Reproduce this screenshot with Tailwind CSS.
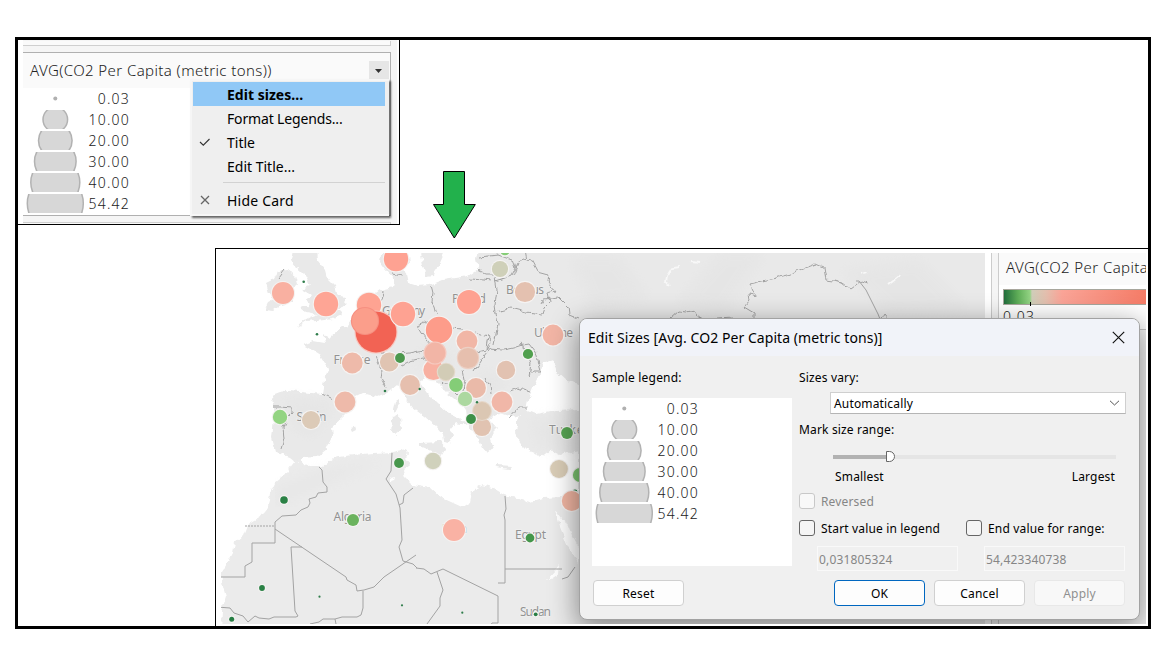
<!DOCTYPE html>
<html lang="en">
<head>
<meta charset="utf-8">
<title>Edit Sizes</title>
<script src="https://cdn.jsdelivr.net/npm/@tailwindcss/browser@4"></script>
</head>
<body class="h-[648px] w-[1152px] overflow-hidden bg-white font-['Noto_Sans',sans-serif] text-black">
<main class="mt-[37px] ml-[15px] flex h-[592px] w-[1136px] flex-col border-3 border-black">

  <!-- Size legend card with its context menu -->
  <div class="flex h-[208px] shrink-0 items-start">
    <section class="relative h-[185px] w-[382px] border-r border-b border-black pr-[2px] pl-[5px]">
      <div class="flex h-full flex-col bg-[#f5f5f5] pt-px">
        <div class="h-[5px] w-[368px] shrink-0 border-r border-b border-[#cfcfcf] bg-[#fafafa]"></div>
        <div class="mt-[6px] h-[164px] w-[368px] shrink-0 border-t border-r border-b border-[#b0b0b0] bg-white">
          <div class="flex h-[35px] items-center justify-between bg-[#fafafa] pl-[7px]">
            <h2 class="text-[15px] font-light tracking-[0.4px] whitespace-nowrap text-[#222]">AVG(CO2 Per Capita (metric tons))</h2>
            <button class="mr-px flex h-5 w-5 items-center justify-center bg-[#e6e6e6] pr-px" aria-label="Card menu"><svg class="h-1 w-[7px]" viewBox="0 0 7 4"><path d="M0 0h7L3.5 4z" fill="#333"/></svg></button>
          </div>
          <div class="w-[107px] pl-[3px] text-[14px] leading-[21px] font-light tracking-[1.2px] text-[#222]">
            <div class="flex h-[21px] items-center justify-between"><svg class="h-[19px] w-[59px]"><circle cx="29.3" cy="9.5" r="2" fill="#b0b0b0"/></svg><span>0.03</span></div>
            <div class="flex h-[21px] items-center justify-between"><svg class="h-[19px] w-[59px]"><circle cx="29.3" cy="9.5" r="12.3" fill="#d7d7d7" stroke="#b2b2b2" stroke-width="1.5"/></svg><span>10.00</span></div>
            <div class="flex h-[21px] items-center justify-between"><svg class="h-[19px] w-[59px]"><circle cx="29.3" cy="9.5" r="16.8" fill="#d7d7d7" stroke="#b2b2b2" stroke-width="1.5"/></svg><span>20.00</span></div>
            <div class="flex h-[21px] items-center justify-between"><svg class="h-[19px] w-[59px]"><circle cx="29.3" cy="9.5" r="20.8" fill="#d7d7d7" stroke="#b2b2b2" stroke-width="1.5"/></svg><span>30.00</span></div>
            <div class="flex h-[21px] items-center justify-between"><svg class="h-[19px] w-[59px]"><circle cx="29.3" cy="9.5" r="24.5" fill="#d7d7d7" stroke="#b2b2b2" stroke-width="1.5"/></svg><span>40.00</span></div>
            <div class="flex h-[21px] items-center justify-between"><svg class="h-[19px] w-[59px]"><circle cx="29.3" cy="9.5" r="28" fill="#d7d7d7" stroke="#b2b2b2" stroke-width="1.5"/></svg><span>54.42</span></div>
          </div>
        </div>
        <div class="mt-[6px] h-[2px] w-[368px] shrink-0 border-t border-r border-[#cfcfcf] bg-[#fafafa]"></div>
      </div>
      <div class="absolute top-[39px] left-[172px] h-[137px] w-[199px] border-2 border-r-0 border-[#f6f6f6] bg-[#efefef] pt-px pl-px text-[14px] shadow-[2px_2px_2px_rgba(0,0,0,0.6)]">
        <div class="flex h-6 w-48 items-center bg-[#90c8f6] pl-[34px] font-bold"><span class="tracking-[0.02px]">Edit sizes...</span></div>
        <div class="flex h-6 items-center pl-[34px]"><span class="tracking-[-0.15px]">Format Legends...</span></div>
        <div class="flex h-6 items-center"><svg class="ml-[6px] h-[10px] w-[12px]" viewBox="0 0 12 10"><path d="M1 5l3.3 3.2L10.5 2" fill="none" stroke="#333" stroke-width="1.1"/></svg><span class="ml-[16px]">Title</span></div>
        <div class="flex h-6 items-center pl-[34px]"><span>Edit Title...</span></div>
        <div class="mt-1 mb-[5px] ml-[30px] h-px w-[162px] bg-[#d2d2d2]"></div>
        <div class="flex h-6 items-center"><svg class="ml-[7px] h-[10px] w-[10px]" viewBox="0 0 10 10"><path d="M1 1l8 8M9 1l-8 8" fill="none" stroke="#666" stroke-width="1.3"/></svg><span class="ml-[17px] tracking-[0.2px]">Hide Card</span></div>
      </div>
    </section>
    <svg class="mt-[131px] ml-[33px] h-[69px] w-[45px]" viewBox="433 171 45 69"><path d="M443.5 171.5h21v33h10.8l-21 33.5-20.8-33.5h10z" fill="#22b14c" stroke="#000"/></svg>
  </div>

  <!-- Worksheet: map, colour legend and the dialog above them -->
  <section class="ml-[197px] h-[378px] border-t border-l border-black pt-1 pr-[2px] pb-[2px] pl-[5px]">
    <div class="relative flex h-[371px] w-[925px] overflow-hidden">
      <svg class="h-[371px] w-[764px] shrink-0" viewBox="221 253 764 371" font-family="Noto Sans, sans-serif">
        <defs>
          <filter id="relief" x="0" y="0" width="1" height="1"><feGaussianBlur stdDeviation="6"/></filter>
          <filter id="rough" filterUnits="userSpaceOnUse" x="215" y="245" width="780" height="390"><feTurbulence type="fractalNoise" baseFrequency="0.16" numOctaves="2" seed="4"/><feDisplacementMap in="SourceGraphic" scale="6" xChannelSelector="R" yChannelSelector="G"/></filter>
          <filter id="rough-line" filterUnits="userSpaceOnUse" x="215" y="245" width="780" height="390"><feTurbulence type="fractalNoise" baseFrequency="0.13" numOctaves="2" seed="7"/><feDisplacementMap in="SourceGraphic" scale="6" xChannelSelector="R" yChannelSelector="G"/></filter>
        </defs>
        <rect x="221" y="253" width="764" height="371" fill="#fff"/>
        <g filter="url(#rough)">
          <g fill="#e9e9e9">
            <path d="M278 271l9-1 8 6 2 7-4 7-1 12-11 3-7 5-9-1 3-6 6-3-5-7-3-10 8-4z"/>
            <path d="M293 248h24l1 13 7 9 2 8 8 8 3 11 8 1-1 7-7 5 4 4-9 4-17 2-10 1-9 6 4-5 9-5 8-3-12-2-5-4 8-3-2-5 4-5-10-6 9-3-3-9-6-6-5-4-5-6z"/>
            <path d="M272 395l8-3 8-1 35 3 2-14 3-12-8-13-8-5-9-5 10-4 12 2-2-10 7 5 8-7 10-6 5-7 5-7 4-8 18-13 13-3 2-9-1-6 6-3 6 4 2 10 10 3 12-1 13-5 12-2 13-2 10-7-2-10 2-10h520v390H579V450l-19 5-10-5-10 8-5-5-8-3-7-7-5-10 2-6v-8l3-4-7 2-13-4-11 6 8 9-5 5-2 7 3 8-6 5-5-6-4-9-6-8-6-10-1-10-5-7-13-11-14-14-8-3-5 8 7 10 10 10 10 9 13 6 8 7-13-2-5 6 4 6-4 8-6-1-1-8-7-8-11-9-12-9-9-12-4-13-13 10-10 4-14-4-8 4-2 10-10 10-11 10 1 10-6 12-10 8-15 1-5 5-7-6-6-2-8-2-4-15 2-20z"/>
            <path d="M391 248h-9l-2 14 6 8 8 9 6-2 2-9 8-5-2-15zM420 248h25l-6 14-5 14-8 1-3-12z"/>
            <path d="M395 401l3-2 1 8-3 6-3-4zM392 418l8-3 1 15-6 5-4-3zM350 428l5-1 1 3-4 2zM420 443l21-1 5 6-4 7-10-4-12-5zM496 465l16 1-2 3-15-2z"/>
          </g>
          <path fill="#ebebeb" d="M296 460l-4 5-7 10-10 8-5 10-2 14-8 10-13 8-4 10-8 7-2 11-8 15-4 6 2 13 3 10-4 13-1 24h500V440H600l-21 50-16 7-20 1-13 4-25-7-12-7-10-3-11 7-2 10-8 5-22-10-10-9-17-3-8-8-2-7 7-5-5-6 3-5-2-5-14 3-19 1-20 2-20 3-10 8h-13z"/>
          <path fill="#fff" d="M528 400l6-15 6-12 3-10 10-3 4 12 10 9 13 3v25l-24 1-20 4-10-4zM555 510l7 9 5 4 5 12 7 12v16l-11-16-8-20zM547 580l8-9 5-6-1 9-8 5zM389 478l6-2-1 4-6 2z"/>
        </g>
        <g fill="#dfdfdf" opacity=".3" filter="url(#relief)">
          <path d="M530 420l49-8v40l-40-5zM285 398l50 4-20 34-20-5zM425 345l30 10-10 20-30-10zM275 490l45-20 60-8-60 25-45 20zM570 258l50 0 30 40-60 8zM720 253l45 0-40 60-50-10zM840 270l80-10 50 50-80 5zM480 370l30 8-20 22-15-8z"/>
        </g>
        <g fill="none" stroke="#f8f8f8" stroke-width="1.8" filter="url(#rough-line)"><path d="M680 267l-8 1-5 8-1 6 3 4M691 261l9 1M860 274l6-2M888 285l13-10"/></g>
        <!-- country borders -->
        <g fill="none" stroke="#a3a3a3" stroke-width="1" stroke-linejoin="round">
          <path filter="url(#rough-line)" d="M431 285l2 8-1 8 3 5 2 8M417 325l7-3 8 4 6 2M417 325l4 7 7 8 4 5M383 292l-1 6-3 4M376 349l8 5 5 0M400 354l9-1 9-2 14-2M402 365l8-4 12-3 8 2M452 328l10 1M475 332l13 4 3 6-5 8-21 5M488 336l-2 13 18 1 10-2 9-3 6-1 7 9 5 18-8 0-4 6 2-14-6-15-5-4M490 348l-6 8-7 11-3 5M463 370l2 10-2 10M494 344l2-10 2-10-3-14M495 277l2 13-2 15 1 7 15-4 15 4 16 2 2-6 5-5-2-10 8-2-7-9 1-8-11-3-6-11-9-2-5 6-5 12M470 279l13 1 8 1M495 282l9-3 7-3 6-12M478 257l20-2 14 5 3 8M477 269l10 5 6 0M526 248l2 12M542 303l2-4 14-2 10 10 1 8 10 4M443 381l10 9 8 8 8 6M485 378l5 8 1 8M510 391l8-3 12 4M515 410l4-3 8 0M511 419l4-9M322 394l10 5M376 357l3 6 3 8-1 7 5 10M280 407l12 1 0 5-6 6-3 8 1 12-3 10M274 407l6 0M278 277l6-8M392 273l11 2M405 319l6-5"/>
          <path d="M319 467l3 3 1 12 4 5v5l-9 1-2 4-7 2 1 4-2 4-7 3-5 5-14 1-7 6v21h-23v19l-7 4v11h-24M275 529l71 48 1 3 9 5 1 6 7-1 10-3 10-10 32-22M302 547h-11l4 64 3 5-2 1h-22l-5 2-10-1-4-2-7 6-5-6-9-3-4-5-13-1-2 3M363 591v17l-2 7-4 2h-15l-7 2-12 0-4 3-9 2M335 619l1 5M392 453l-1 18-5 8 10 15 4 14 2 32-3 7 4 14 10 3 4 4M399 505l4-2 1-8 9-7M416 568l8 1 7 5 12-5 55 27v27h-6l-5 9M437 572l6 18-3 8v8l-13 18M498 583h7v-63l-1-5 2-6-1-13M505 569h57M562 579l6-2 7-10"/>
          <path d="M245 526h29" stroke-dasharray="2 1"/>
          <path filter="url(#rough-line)" d="M671 318l8-7 7 1 8-2 4 6 5 3M718 319l15-1M754 321v-8l-10-6 6-7-1-6 8 2-4-5-3-7 25-6 12-3 20-8 8-3 9 4 2 12 8 1 7 2 9 7 12-9 6 2M881 321l4-7 4 5"/>
          <path d="M856 281l3 0 7 9 12 24 2 5"/>
        </g>
        <g fill="#929292" font-size="12" stroke="#f0f0f0" stroke-width="1.500" paint-order="stroke">
          <text x="333.500" y="363.500" textLength="37">France</text>
          <text x="296.500" y="420.500" textLength="30">Spain</text>
          <text x="382" y="314.500" textLength="43">Germany</text>
          <text x="452" y="303" textLength="34">Poland</text>
          <text x="506" y="293.500" textLength="38">Belarus</text>
          <text x="534" y="336.500" textLength="39">Ukraine</text>
          <text x="549" y="434" textLength="41">Turkey</text>
          <text x="333.500" y="520.500" textLength="38">Algeria</text>
          <text x="442" y="533" textLength="25">Libya</text>
          <text x="515" y="539" textLength="31">Egypt</text>
          <text x="520" y="615.500" textLength="31">Sudan</text>
        </g>
        <!-- marks -->
        <g stroke="#f5f3f2" stroke-width="2.200" paint-order="stroke">
          <circle cx="396" cy="259" r="12.200" fill="#fea292"/><circle cx="283" cy="293" r="11" fill="#f9b0a1"/><circle cx="326" cy="304" r="12.200" fill="#fea595"/>
          <circle cx="369" cy="305" r="12.200" fill="#fea392"/><circle cx="376" cy="332" r="20.400" stroke="#f9c5bd" fill="#f26354"/><circle cx="365" cy="321" r="13" stroke="#f68f80" fill="#fb9e8b"/>
          <circle cx="403" cy="314" r="12.200" fill="#fea292"/><circle cx="352.300" cy="363" r="10.400" fill="#eebaaa"/><circle cx="389.300" cy="362" r="9.400" fill="#e0c4b2"/>
          <circle cx="400" cy="358" r="4.900" fill="#4c984d"/><circle cx="345" cy="402" r="10.400" fill="#eebaaa"/><circle cx="280" cy="417" r="7.200" fill="#93d482"/>
          <circle cx="311" cy="420" r="9" fill="#dccab7"/><circle cx="505" cy="250" r="5.200" fill="#85cd77"/><circle cx="500" cy="269" r="8.100" fill="#cfd0b9"/>
          <circle cx="525" cy="292" r="10.100" fill="#e4c1b0"/><circle cx="469" cy="302" r="12" fill="#fea191"/><circle cx="439" cy="330" r="13.200" fill="#fd9c8a"/>
          <circle cx="433.500" cy="370" r="10.100" fill="#f8b0a1"/><circle cx="435" cy="353" r="10.400" stroke="#f5c9bf" fill="#f2b5a6"/>
          <circle cx="467" cy="341" r="10.400" fill="#f1b6a6"/><circle cx="468" cy="358" r="10.100" stroke="#ecd0c5" fill="#e6bfae"/>
          <circle cx="446" cy="372" r="8.200" stroke="#e4d9cb" fill="#d2ccb6"/><circle cx="456" cy="385" r="6.900" fill="#84cd77"/><circle cx="476" cy="388" r="9.900" fill="#eabaa9"/>
          <circle cx="465" cy="399" r="7.200" fill="#acd8a0"/><circle cx="410" cy="385" r="9.900" fill="#e6bfae"/><circle cx="502" cy="402" r="10.400" fill="#f1b7a8"/>
          <circle cx="482" cy="427" r="9.100" fill="#e1c3b1"/><circle cx="482" cy="411" r="8.900" stroke="#e6d8ca" fill="#dbc7b3"/><circle cx="471" cy="419" r="4.900" fill="#3d9047"/>
          <circle cx="506" cy="370" r="9.200" fill="#e2c2b1"/><circle cx="553" cy="335" r="10.400" fill="#f2b5a5"/><circle cx="528" cy="354" r="5.100" fill="#51a04e"/>
          <circle cx="567" cy="433" r="5.900" fill="#57a452"/><circle cx="433" cy="461" r="8.200" fill="#d0d1bc"/><circle cx="399" cy="463" r="4.900" fill="#47964c"/>
          <circle cx="284" cy="500" r="3.800" fill="#2a8145"/><circle cx="353" cy="520" r="6" fill="#6bb35e"/><circle cx="454" cy="530" r="11" fill="#f9b2a4"/>
          <circle cx="530" cy="538" r="4.400" fill="#43964a"/><circle cx="559" cy="469" r="8.900" fill="#d9ccb6"/><circle cx="580" cy="475" r="7.100" fill="#7cc470"/>
          <circle cx="575" cy="492" r="2.400" fill="#1d7a41"/><circle cx="571.700" cy="501" r="9.900" fill="#f0b5a2"/><circle cx="262" cy="588" r="2.900" fill="#2a8145"/>
          <circle cx="231.700" cy="619.300" r="2.500" fill="#267d43"/><circle cx="535.700" cy="614.300" r="1.900" fill="#267d43"/>
        </g>
        <g fill="#2f7d4b"><circle cx="303.700" cy="281.700" r="1.300"/><circle cx="317" cy="334.300" r="1.300"/><circle cx="385" cy="391" r="1.300"/><circle cx="419.700" cy="389" r="1.200"/><circle cx="477" cy="402.300" r="1.200"/><circle cx="319.500" cy="596.700" r="1.100"/><circle cx="402" cy="605.300" r="1.100"/><circle cx="462.300" cy="612.700" r="1.100"/></g>
      </svg>
      <div class="ml-[6px] w-2 shrink-0 border-x border-[#cccccc] bg-[#f5f5f5]"></div>
      <aside class="flex-1 bg-[#f5f5f5]">
        <div class="h-[77px] overflow-hidden border-b border-[#c4c4c4] bg-white">
          <h2 class="h-8 bg-[#fafafa] pt-[4px] pl-[7px] text-[15px] leading-5 font-light tracking-[0.4px] whitespace-nowrap text-[#222]">AVG(CO2 Per Capita</h2>
          <div class="mt-1 ml-1 h-4 w-[160px] border border-[#a8a69c] bg-[linear-gradient(90deg,#226e3c_0px,#5fae58_14px,#93d383_26px,#d0cdb9_28px,#e3bfae_42px,#faa497_58px,#f57b66_143px)]"><div class="ml-[26px] h-4 w-px translate-y-[12px]"><div class="h-[4px] w-px bg-black"></div></div></div>
          <p class="mt-[1px] ml-1 text-[14px] font-light tracking-[1.2px] text-[#222]">0.03</p>
        </div>
      </aside>

      <div role="dialog" class="absolute top-[65px] left-[358px] flex h-[302px] w-[561px] flex-col rounded-lg border border-[#a2a2a2] bg-[#f0f0f0] text-[12px] shadow-[0_8px_28px_2px_rgba(0,0,0,0.42)]">
        <header class="flex h-[37px] shrink-0 items-center justify-between rounded-t-[7px] bg-[#f1f3f9] pr-[14px] pl-2">
          <h1 class="text-[14px] tracking-[0.06px]">Edit Sizes [Avg. CO2 Per Capita (metric tons)]</h1>
          <svg class="h-[13px] w-[13px]" viewBox="0 0 13 13"><path d="M.8.8l11.400 11.400M12.200.8L.8 12.200" stroke="#111" stroke-width="1.150"/></svg>
        </header>
        <div class="flex flex-1 pl-3">
          <div class="w-[200px] pt-3">
            <h3 class="h-5 leading-5 tracking-[0.2px]">Sample legend:</h3>
            <div class="mt-[10px] h-[168px] bg-white">
              <div class="w-[107px] pl-[3px] text-[14px] leading-[21px] font-light tracking-[1.2px] text-[#222]">
                <div class="flex h-[21px] items-center justify-between"><svg class="h-[19px] w-[59px]"><circle cx="29.3" cy="9.5" r="2" fill="#b0b0b0"/></svg><span>0.03</span></div>
                <div class="flex h-[21px] items-center justify-between"><svg class="h-[19px] w-[59px]"><circle cx="29.3" cy="9.5" r="12.3" fill="#d7d7d7" stroke="#b2b2b2" stroke-width="1.5"/></svg><span>10.00</span></div>
                <div class="flex h-[21px] items-center justify-between"><svg class="h-[19px] w-[59px]"><circle cx="29.3" cy="9.5" r="16.8" fill="#d7d7d7" stroke="#b2b2b2" stroke-width="1.5"/></svg><span>20.00</span></div>
                <div class="flex h-[21px] items-center justify-between"><svg class="h-[19px] w-[59px]"><circle cx="29.3" cy="9.5" r="20.8" fill="#d7d7d7" stroke="#b2b2b2" stroke-width="1.5"/></svg><span>30.00</span></div>
                <div class="flex h-[21px] items-center justify-between"><svg class="h-[19px] w-[59px]"><circle cx="29.3" cy="9.5" r="24.5" fill="#d7d7d7" stroke="#b2b2b2" stroke-width="1.5"/></svg><span>40.00</span></div>
                <div class="flex h-[21px] items-center justify-between"><svg class="h-[19px] w-[59px]"><circle cx="29.3" cy="9.5" r="28" fill="#d7d7d7" stroke="#b2b2b2" stroke-width="1.5"/></svg><span>54.42</span></div>
              </div>
            </div>
            <button class="mt-[14px] ml-px h-[26px] w-[91px] rounded-[4px] border border-[#d0d0d0] bg-[#fdfdfd] pt-[2px] tracking-[0.2px]">Reset</button>
          </div>
          <div class="ml-[7px] w-[327px] pt-3 tracking-[0.16px]">
            <h3 class="h-5 leading-5">Sizes vary:</h3>
            <div class="mt-1 ml-[31px] flex h-[22px] items-center justify-between border border-[#cfcfcf] border-b-[#b5b5b5] bg-white pr-[5px] pl-[3px]"><span class="translate-y-px">Automatically</span><svg class="h-[6px] w-[11px]" viewBox="0 0 11 6"><path d="M1 .8l4.500 4.200L10 .8" fill="none" stroke="#555"/></svg></div>
            <h3 class="mt-[6px] h-5 leading-5">Mark size range:</h3>
            <div class="mt-[11px] ml-[34px] flex h-[11px] w-[283px] items-center"><div class="h-1 w-[53px] bg-[#b2b2b2]"></div><div class="h-[11px] w-[9px] rounded-r-full border border-[#666] bg-white"></div><div class="h-1 flex-1 bg-[#e5e5e5]"></div></div>
            <div class="mt-[5px] ml-9 flex h-5 w-[280px] items-center justify-between"><span>Smallest</span><span>Largest</span></div>
            <label class="mt-[6px] flex h-4 items-center text-[#868686]"><i class="mr-[6px] h-4 w-4 rounded-[3px] border border-[#c8c8c8] bg-[#f8f8f8]"></i><span class="translate-y-px">Reversed</span></label>
            <div class="mt-[11px] flex h-4">
              <label class="flex w-[167px] items-center"><i class="mr-[6px] h-4 w-4 rounded-[3px] border border-[#666] bg-[#f5f5f5]"></i><span class="translate-y-px">Start value in legend</span></label>
              <label class="flex items-center"><i class="mr-[6px] h-4 w-4 rounded-[3px] border border-[#666] bg-[#f5f5f5]"></i><span class="translate-y-px">End value for range:</span></label>
            </div>
            <div class="mt-[10px] ml-[18px] flex gap-[26px] text-[#868686]">
              <div class="flex h-[25px] w-[141px] items-center border border-[#f9f9f9] pt-[2px] pl-px">0,031805324</div>
              <div class="flex h-[25px] w-[141px] items-center border border-[#f9f9f9] pt-[2px] pl-px">54,423340738</div>
            </div>
            <div class="mt-[9px] ml-[35px] flex gap-[9px]">
              <button class="h-[26px] w-[91px] rounded-[4px] border border-[#0067c0] bg-[#fdfdfd] pt-[2px]">OK</button>
              <button class="h-[26px] w-[91px] rounded-[4px] border border-[#d0d0d0] bg-[#fdfdfd] pt-[2px]">Cancel</button>
              <button class="h-[26px] w-[91px] rounded-[4px] border border-[#e8e8e8] bg-[#f8f8f8] pt-[2px] text-[#909090]">Apply</button>
            </div>
          </div>
        </div>
      </div>
    </div>
  </section>
</main>
</body>
</html>
